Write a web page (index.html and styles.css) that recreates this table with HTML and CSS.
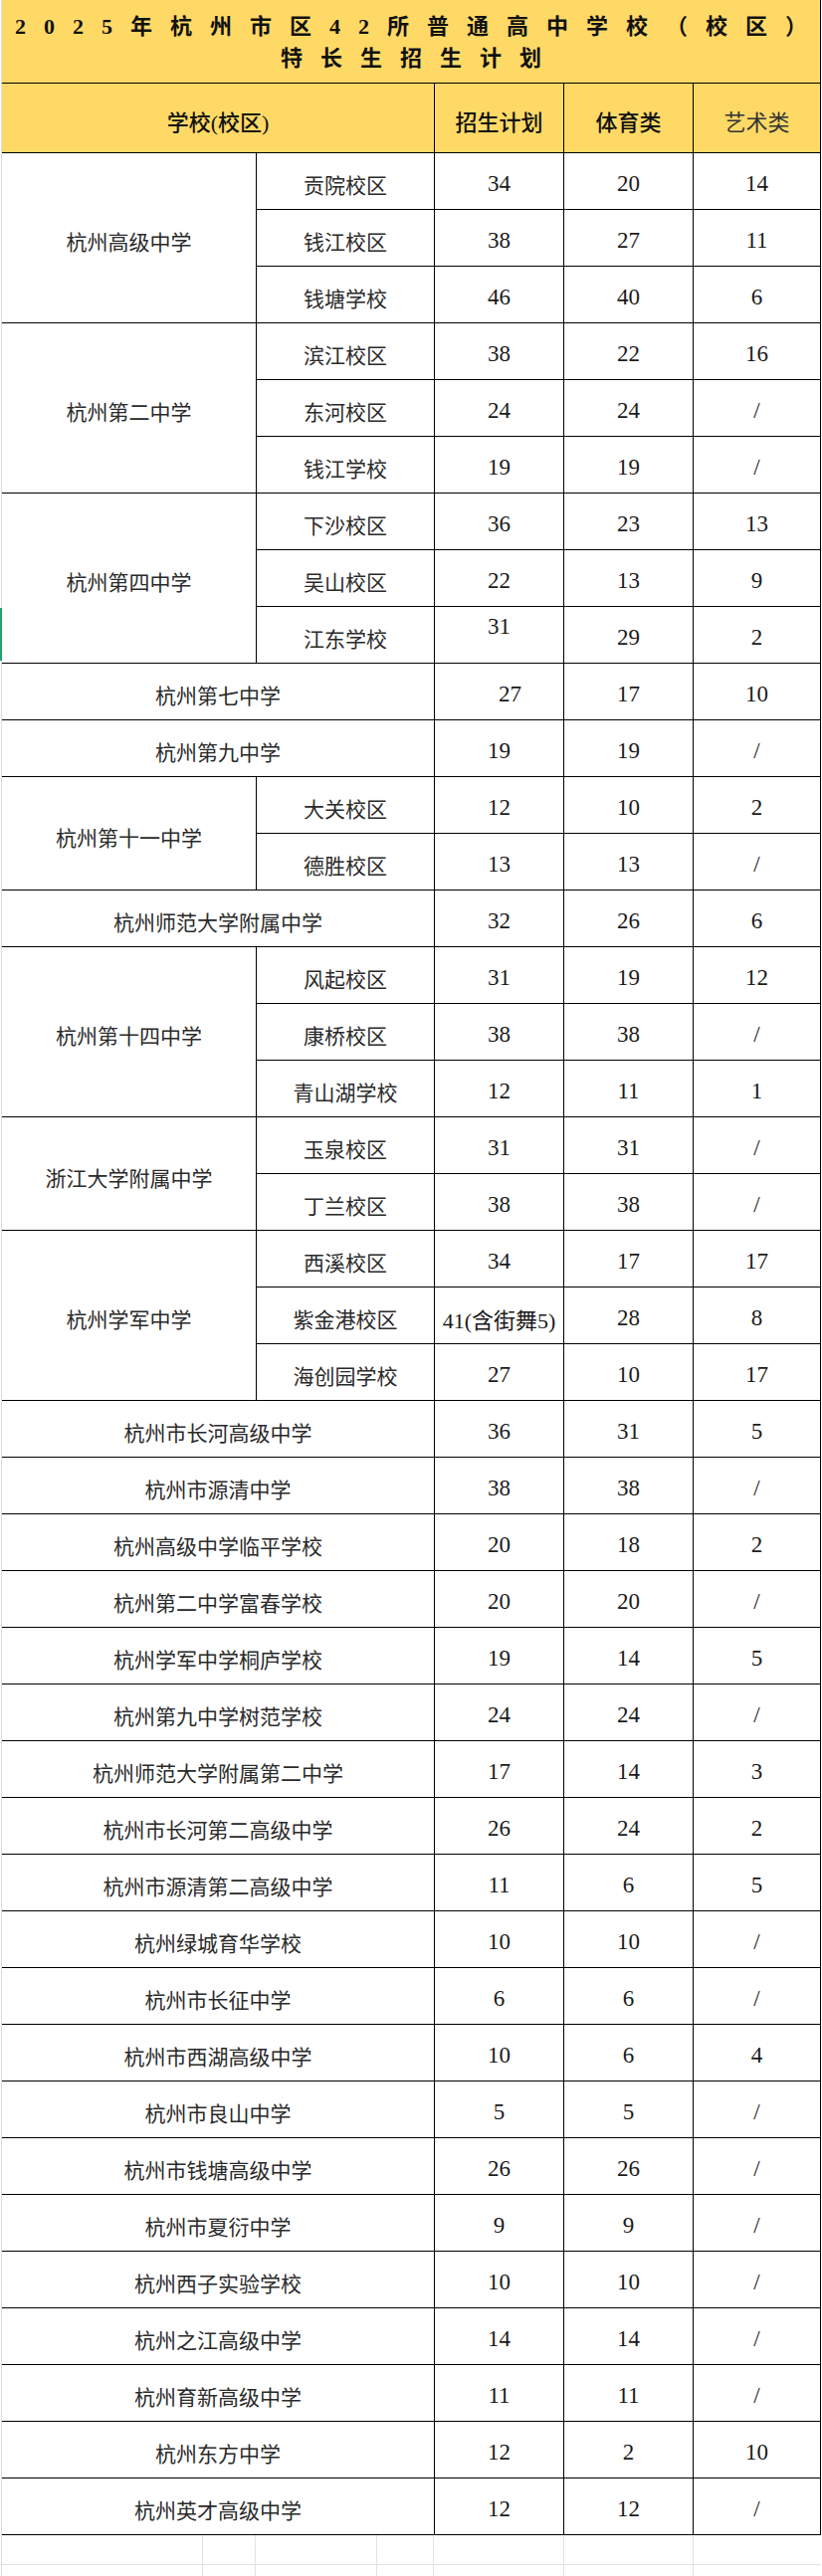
FILE: index.html
```html
<!DOCTYPE html>
<html lang="zh-CN">
<head>
<meta charset="utf-8">
<title>2025年杭州市区42所普通高中学校（校区）特长生招生计划</title>
<link rel="stylesheet" href="styles.css">
</head>
<body>
<div class="page">
  <div class="sheet">
    <div class="title">
      <div class="title-line">2025年杭州市区42所普通高中学校（校区）</div>
      <div class="title-line">特长生招生计划</div>
    </div>
    <div class="head span2">学校(校区)</div>
    <div class="head">招生计划</div>
    <div class="head">体育类</div>
    <div class="head light">艺术类</div>

    <div class="c rows3">杭州高级中学</div>
    <div class="c">贡院校区</div><div class="c n">34</div><div class="c n">20</div><div class="c n">14</div>
    <div class="c">钱江校区</div><div class="c n">38</div><div class="c n">27</div><div class="c n">11</div>
    <div class="c">钱塘学校</div><div class="c n">46</div><div class="c n">40</div><div class="c n">6</div>

    <div class="c rows3">杭州第二中学</div>
    <div class="c">滨江校区</div><div class="c n">38</div><div class="c n">22</div><div class="c n">16</div>
    <div class="c">东河校区</div><div class="c n">24</div><div class="c n">24</div><div class="c n">/</div>
    <div class="c">钱江学校</div><div class="c n">19</div><div class="c n">19</div><div class="c n">/</div>

    <div class="c rows3">杭州第四中学</div>
    <div class="c">下沙校区</div><div class="c n">36</div><div class="c n">23</div><div class="c n">13</div>
    <div class="c">吴山校区</div><div class="c n">22</div><div class="c n">13</div><div class="c n">9</div>
    <div class="c">江东学校</div><div class="c n raised">31</div><div class="c n">29</div><div class="c n">2</div>

    <div class="c span2">杭州第七中学</div><div class="c n shifted">27</div><div class="c n">17</div><div class="c n">10</div>
    <div class="c span2">杭州第九中学</div><div class="c n">19</div><div class="c n">19</div><div class="c n">/</div>

    <div class="c rows2">杭州第十一中学</div>
    <div class="c">大关校区</div><div class="c n">12</div><div class="c n">10</div><div class="c n">2</div>
    <div class="c">德胜校区</div><div class="c n">13</div><div class="c n">13</div><div class="c n">/</div>

    <div class="c span2">杭州师范大学附属中学</div><div class="c n">32</div><div class="c n">26</div><div class="c n">6</div>

    <div class="c rows3">杭州第十四中学</div>
    <div class="c">风起校区</div><div class="c n">31</div><div class="c n">19</div><div class="c n">12</div>
    <div class="c">康桥校区</div><div class="c n">38</div><div class="c n">38</div><div class="c n">/</div>
    <div class="c">青山湖学校</div><div class="c n">12</div><div class="c n">11</div><div class="c n">1</div>

    <div class="c rows2">浙江大学附属中学</div>
    <div class="c">玉泉校区</div><div class="c n">31</div><div class="c n">31</div><div class="c n">/</div>
    <div class="c">丁兰校区</div><div class="c n">38</div><div class="c n">38</div><div class="c n">/</div>

    <div class="c rows3">杭州学军中学</div>
    <div class="c">西溪校区</div><div class="c n">34</div><div class="c n">17</div><div class="c n">17</div>
    <div class="c">紫金港校区</div><div class="c mixed">41(含街舞5)</div><div class="c n">28</div><div class="c n">8</div>
    <div class="c">海创园学校</div><div class="c n">27</div><div class="c n">10</div><div class="c n">17</div>

    <div class="c span2">杭州市长河高级中学</div><div class="c n">36</div><div class="c n">31</div><div class="c n">5</div>
    <div class="c span2">杭州市源清中学</div><div class="c n">38</div><div class="c n">38</div><div class="c n">/</div>
    <div class="c span2">杭州高级中学临平学校</div><div class="c n">20</div><div class="c n">18</div><div class="c n">2</div>
    <div class="c span2">杭州第二中学富春学校</div><div class="c n">20</div><div class="c n">20</div><div class="c n">/</div>
    <div class="c span2">杭州学军中学桐庐学校</div><div class="c n">19</div><div class="c n">14</div><div class="c n">5</div>
    <div class="c span2">杭州第九中学树范学校</div><div class="c n">24</div><div class="c n">24</div><div class="c n">/</div>
    <div class="c span2">杭州师范大学附属第二中学</div><div class="c n">17</div><div class="c n">14</div><div class="c n">3</div>
    <div class="c span2">杭州市长河第二高级中学</div><div class="c n">26</div><div class="c n">24</div><div class="c n">2</div>
    <div class="c span2">杭州市源清第二高级中学</div><div class="c n">11</div><div class="c n">6</div><div class="c n">5</div>
    <div class="c span2">杭州绿城育华学校</div><div class="c n">10</div><div class="c n">10</div><div class="c n">/</div>
    <div class="c span2">杭州市长征中学</div><div class="c n">6</div><div class="c n">6</div><div class="c n">/</div>
    <div class="c span2">杭州市西湖高级中学</div><div class="c n">10</div><div class="c n">6</div><div class="c n">4</div>
    <div class="c span2">杭州市良山中学</div><div class="c n">5</div><div class="c n">5</div><div class="c n">/</div>
    <div class="c span2">杭州市钱塘高级中学</div><div class="c n">26</div><div class="c n">26</div><div class="c n">/</div>
    <div class="c span2">杭州市夏衍中学</div><div class="c n">9</div><div class="c n">9</div><div class="c n">/</div>
    <div class="c span2">杭州西子实验学校</div><div class="c n">10</div><div class="c n">10</div><div class="c n">/</div>
    <div class="c span2">杭州之江高级中学</div><div class="c n">14</div><div class="c n">14</div><div class="c n">/</div>
    <div class="c span2">杭州育新高级中学</div><div class="c n">11</div><div class="c n">11</div><div class="c n">/</div>
    <div class="c span2">杭州东方中学</div><div class="c n">12</div><div class="c n">2</div><div class="c n">10</div>
    <div class="c span2">杭州英才高级中学</div><div class="c n">12</div><div class="c n">12</div><div class="c n">/</div>

    <div class="row-marker"></div>
  </div>
  <div class="blank">
    <div class="g"></div><div class="g"></div><div class="g"></div><div class="g"></div><div class="g"></div><div class="g"></div><div class="g last"></div>
    <div class="g"></div><div class="g"></div><div class="g"></div><div class="g"></div><div class="g"></div><div class="g"></div><div class="g last"></div>
  </div>
</div>
</body>
</html>
```

FILE: styles.css
```css
html, body {
  margin: 0;
  padding: 0;
  background: #ffffff;
}

.page {
  width: 826px;
  font-family: "Liberation Serif", "Noto Sans CJK SC", serif;
  color: #2a2a2a;
}

.sheet {
  position: relative;
  display: grid;
  grid-template-columns: 256px 179px 130px 130px 128px;
  grid-template-rows: 84px 70px repeat(42, 57px);
  margin-left: 2px;
  width: 823px;
  box-shadow: -1px 0 0 #dcdcdc;
}

.title {
  grid-column: 1 / -1;
  background: #ffd966;
  border-right: 1px solid #000;
  border-bottom: 1px solid #000;
  box-sizing: border-box;
  display: flex;
  flex-direction: column;
  align-items: center;
  padding-top: 11px;
  padding-left: 18px;
}

.title-line {
  font-size: 22px;
  line-height: 32px;
  letter-spacing: 18px;
  font-weight: 700;
  color: #111;
  white-space: nowrap;
}

.head {
  background: #ffd966;
  border-right: 1px solid #000;
  border-bottom: 1px solid #000;
  box-sizing: border-box;
  display: flex;
  align-items: center;
  justify-content: center;
  padding-top: 5px;
  font-size: 22px;
  font-weight: 500;
  color: #111;
}

.head.light {
  font-weight: 400;
  color: #333;
}

.c {
  border-right: 1px solid #000;
  border-bottom: 1px solid #000;
  box-sizing: border-box;
  display: flex;
  align-items: center;
  justify-content: center;
  padding-top: 6px;
  font-size: 21px;
  white-space: nowrap;
}

.c.n {
  font-size: 23px;
  color: #1a1a1a;
}

.c.mixed {
  font-size: 22px;
  color: #1a1a1a;
}

.span2 {
  grid-column: span 2;
}

.rows3 {
  grid-row: span 3;
}

.rows2 {
  grid-row: span 2;
}

.c.raised {
  align-items: flex-start;
  padding-top: 7px;
}

.c.shifted {
  padding-left: 22px;
}

.row-marker {
  position: absolute;
  left: -2px;
  top: 611px;
  width: 2px;
  height: 53px;
  background: #21a36b;
}

.blank {
  display: grid;
  grid-template-columns: 202px 53px 122px 57px 131px 130px 128px;
  grid-template-rows: 30px 30px;
  margin-left: 2px;
  width: 823px;
  box-shadow: -1px 0 0 #dcdcdc;
}

.g {
  border-right: 1px solid #e2e2e2;
  border-bottom: 1px solid #e2e2e2;
  box-sizing: border-box;
}

.g.last {
  border-right: none;
}
```
